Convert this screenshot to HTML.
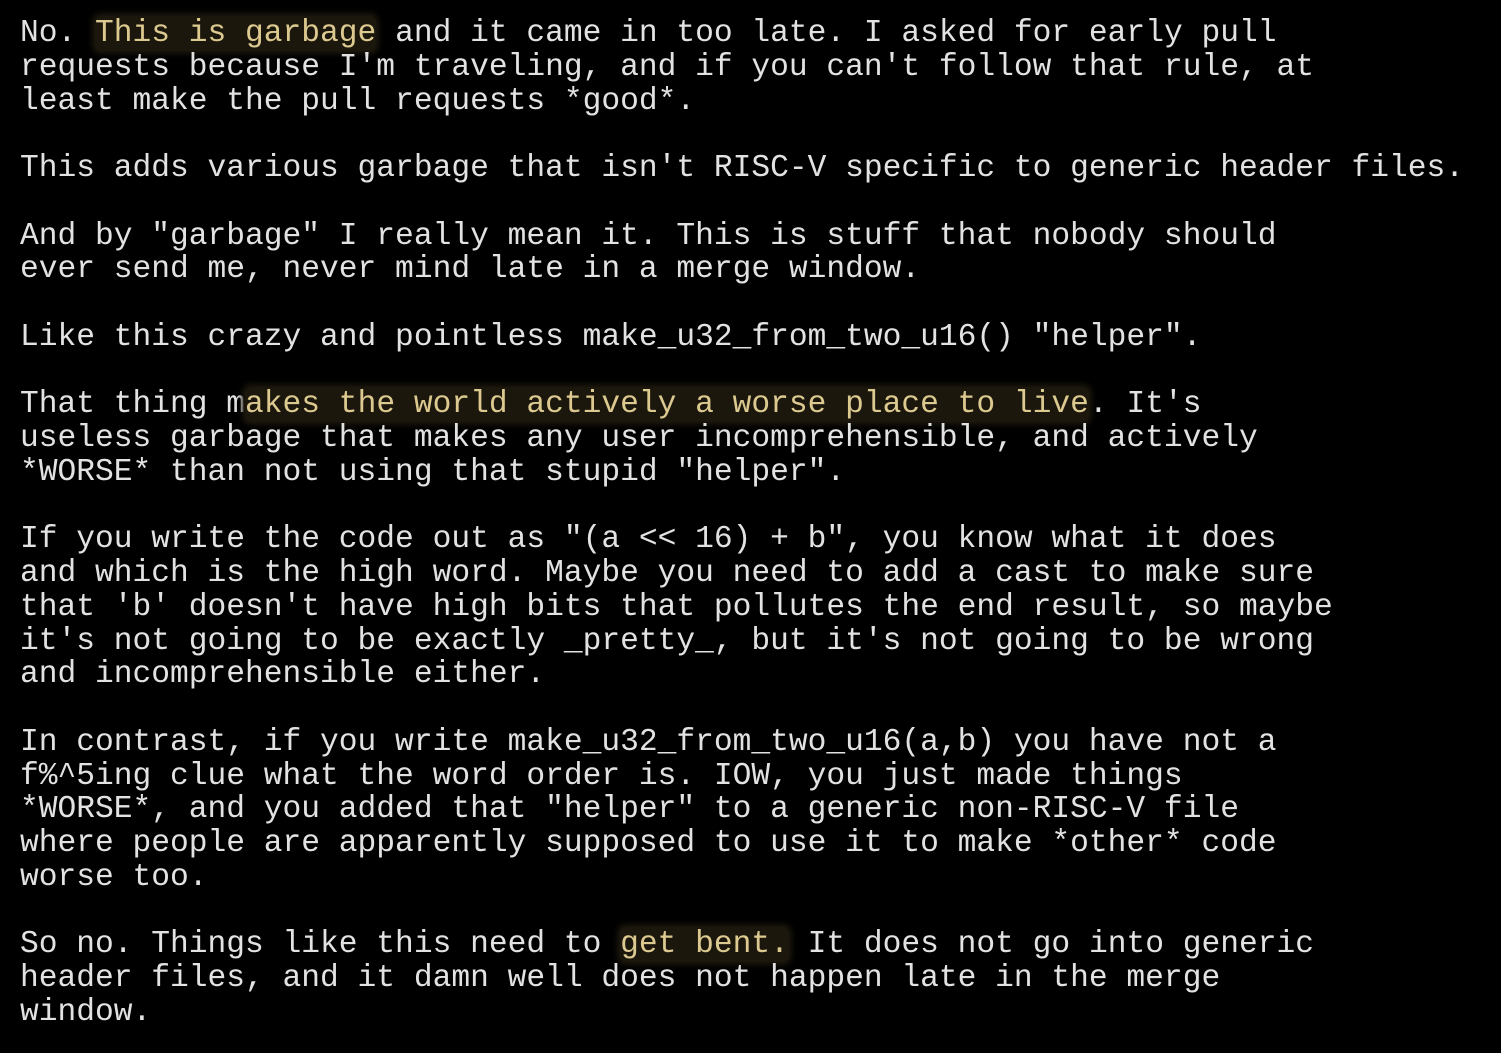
<!DOCTYPE html>
<html><head><style>
html,body{margin:0;background:#000;width:1501px;height:1053px;overflow:hidden}
pre{margin:0;position:absolute;left:20px;top:17px;font-family:"Liberation Mono",monospace;font-size:31.25px;line-height:33.75px;color:#e2e2e2;white-space:pre}
.h{color:#dcc98f;background:#1b170d;border-radius:6px;box-shadow:0 0 6px 3px #1b170d}
</style></head><body><pre>No. <span class="h">This is garbage</span> and it came in too late. I asked for early pull
requests because I'm traveling, and if you can't follow that rule, at
least make the pull requests *good*.

This adds various garbage that isn't RISC-V specific to generic header files.

And by "garbage" I really mean it. This is stuff that nobody should
ever send me, never mind late in a merge window.

Like this crazy and pointless make_u32_from_two_u16() "helper".

That thing m<span class="h">akes the world actively a worse place to live</span>. It's
useless garbage that makes any user incomprehensible, and actively
*WORSE* than not using that stupid "helper".

If you write the code out as "(a &lt;&lt; 16) + b", you know what it does
and which is the high word. Maybe you need to add a cast to make sure
that 'b' doesn't have high bits that pollutes the end result, so maybe
it's not going to be exactly _pretty_, but it's not going to be wrong
and incomprehensible either.

In contrast, if you write make_u32_from_two_u16(a,b) you have not a
f%^5ing clue what the word order is. IOW, you just made things
*WORSE*, and you added that "helper" to a generic non-RISC-V file
where people are apparently supposed to use it to make *other* code
worse too.

So no. Things like this need to <span class="h">get bent.</span> It does not go into generic
header files, and it damn well does not happen late in the merge
window.</pre></body></html>
